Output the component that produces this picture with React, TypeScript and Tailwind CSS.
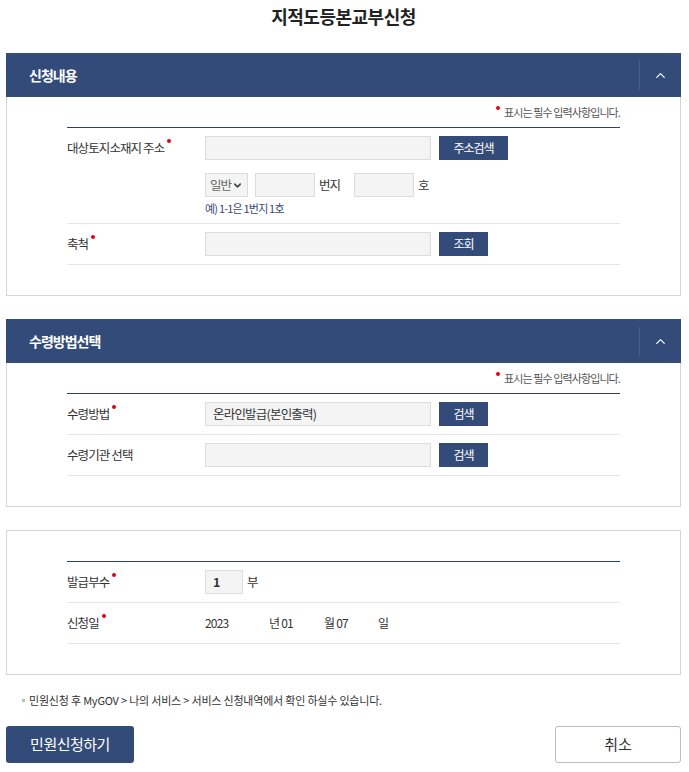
import { ChevronDown, ChevronUp } from 'lucide-react'
import type { ReactNode } from 'react'

const font = { fontFamily: '"Noto Sans CJK KR", "Noto Sans", sans-serif' }

function Req() {
  return <span className="ml-[3px] inline-block h-[4px] w-[4px] -translate-y-[7px] rounded-full bg-[#e60012] align-top" />
}

function SectionHeader({ title }: { title: string }) {
  return (
    <div className="flex h-[44px] items-center bg-[#334b78]">
      <h2 className="flex-1 pl-[23px] text-[14px] font-bold tracking-[-1px] text-white">{title}</h2>
      <div className="h-[29px] w-px bg-[#4a6090]" />
      <button type="button" className="flex h-full w-[41px] items-center justify-center text-white">
        <ChevronUp className="h-[15px] w-[15px]" strokeWidth={2} />
      </button>
    </div>
  )
}

function RequiredNote() {
  return (
    <p className="flex h-[30px] items-center justify-end text-[11px] tracking-[-0.9px] text-[#555]">
      <span className="mr-[4px] inline-block h-[4px] w-[4px] -translate-y-[4px] rounded-full bg-[#e60012]" />
      표시는 필수 입력사항입니다.
    </p>
  )
}

function Row({ label, required, children }: { label: string; required?: boolean; children: ReactNode }) {
  return (
    <div className="flex border-b border-[#e6e6e6] py-[8px]">
      <div className="flex h-[24px] w-[138px] shrink-0 items-center text-[12.5px] tracking-[-0.9px] text-[#333]">
        <span>{label}</span>
        {required ? <Req /> : null}
      </div>
      <div className="flex-1">{children}</div>
    </div>
  )
}

function TextBox({ value, className = 'w-[226px]' }: { value?: string; className?: string }) {
  return (
    <div className={`flex h-[24px] items-center border border-[#dcdcdc] bg-[#f4f4f4] px-[7px] text-[12.5px] tracking-[-0.8px] text-[#333] ${className}`}>
      {value}
    </div>
  )
}

function NavyButton({ label, className = 'w-[49px]' }: { label: string; className?: string }) {
  return (
    <button type="button" className={`ml-[8px] h-[24px] bg-[#334b78] text-[12px] tracking-[-1px] text-white ${className}`}>
      {label}
    </button>
  )
}

export default function App() {
  return (
    <div style={font} className="w-[689px] bg-white pb-[8px] pl-[6px] pr-[8px] text-[#333]">
      <h1 className="pt-[5px] text-center text-[18px] font-bold leading-[22px] tracking-[-0.5px] text-[#222]">지적도등본교부신청</h1>

      {/* 신청내용 */}
      <section className="mt-[26px]">
        <SectionHeader title="신청내용" />
        <div className="border border-t-0 border-[#d5d5d5] px-[60px] pb-[30px]">
          <RequiredNote />
          <div className="border-t border-[#2f4066]">
            <div className="border-b border-[#e6e6e6] pb-[7px] pt-[8px]">
              <div className="flex">
                <div className="flex h-[24px] w-[138px] shrink-0 items-center text-[12.5px] tracking-[-0.9px] text-[#333]">
                  <span>대상토지소재지 주소</span>
                  <Req />
                </div>
                <TextBox />
                <NavyButton label="주소검색" className="w-[69px]" />
              </div>
              <div className="mt-[13px] flex items-center pl-[138px] text-[12.5px] tracking-[-1px]">
                <div className="flex h-[24px] w-[43px] items-center justify-center gap-[1px] border border-[#dcdcdc] bg-[#f4f4f4] text-[#666]">
                  일반
                  <ChevronDown className="h-[11px] w-[11px] text-[#444]" strokeWidth={3.5} />
                </div>
                <div className="ml-[7px] h-[24px] w-[60px] border border-[#dcdcdc] bg-[#f4f4f4]" />
                <span className="ml-[4px] w-[35px] text-[#333]">번지</span>
                <div className="h-[24px] w-[60px] border border-[#dcdcdc] bg-[#f4f4f4]" />
                <span className="ml-[4px] text-[#333]">호</span>
              </div>
              <p className="mt-[3px] pl-[138px] text-[11px] leading-[16px] tracking-[-0.8px] text-[#34497a]">예) 1-1은 1번지 1호</p>
            </div>
            <Row label="축척" required>
              <div className="flex">
                <TextBox />
                <NavyButton label="조회" />
              </div>
            </Row>
          </div>
        </div>
      </section>

      {/* 수령방법선택 */}
      <section className="mt-[23px]">
        <SectionHeader title="수령방법선택" />
        <div className="border border-t-0 border-[#d5d5d5] px-[60px] pb-[30px]">
          <RequiredNote />
          <div className="border-t border-[#2f4066]">
            <Row label="수령방법" required>
              <div className="flex">
                <TextBox value="온라인발급(본인출력)" />
                <NavyButton label="검색" />
              </div>
            </Row>
            <Row label="수령기관 선택">
              <div className="flex">
                <TextBox />
                <NavyButton label="검색" />
              </div>
            </Row>
          </div>
        </div>
      </section>

      {/* 발급부수 */}
      <section className="mt-[23px] border border-[#d5d5d5] px-[60px] pb-[30px] pt-[30px]">
        <div className="border-t border-[#2f4066]">
          <Row label="발급부수" required>
            <div className="flex items-center">
              <TextBox value="1" className="w-[38px] font-bold" />
              <span className="ml-[4px] text-[12.5px]">부</span>
            </div>
          </Row>
          <Row label="신청일" required>
            <div className="flex h-[24px] items-center text-[12px] tracking-[-0.8px] text-[#333]">
              <span className="w-[64px]">2023</span>
              <span className="w-[55px]">년 01</span>
              <span className="w-[54px]">월 07</span>
              <span>일</span>
            </div>
          </Row>
        </div>
      </section>

      <p className="mt-[17px] flex items-center pl-[16px] text-[11px] tracking-[-0.2px] text-[#333]">
        <span className="mr-[4px] inline-block h-[3px] w-[3px] bg-[#bbb]" />
        민원신청 후 MyGOV &gt; 나의 서비스 &gt; 서비스 신청내역에서 확인 하실수 있습니다.
      </p>

      <div className="mt-[17px] flex justify-between">
        <button type="button" className="h-[37px] w-[128px] rounded-[3px] bg-[#334b78] text-[15px] tracking-[-0.5px] text-white">
          민원신청하기
        </button>
        <button type="button" className="h-[37px] w-[126px] rounded-[3px] border border-[#bcbcbc] bg-white text-[15px] text-[#333]">
          취소
        </button>
      </div>
    </div>
  )
}
